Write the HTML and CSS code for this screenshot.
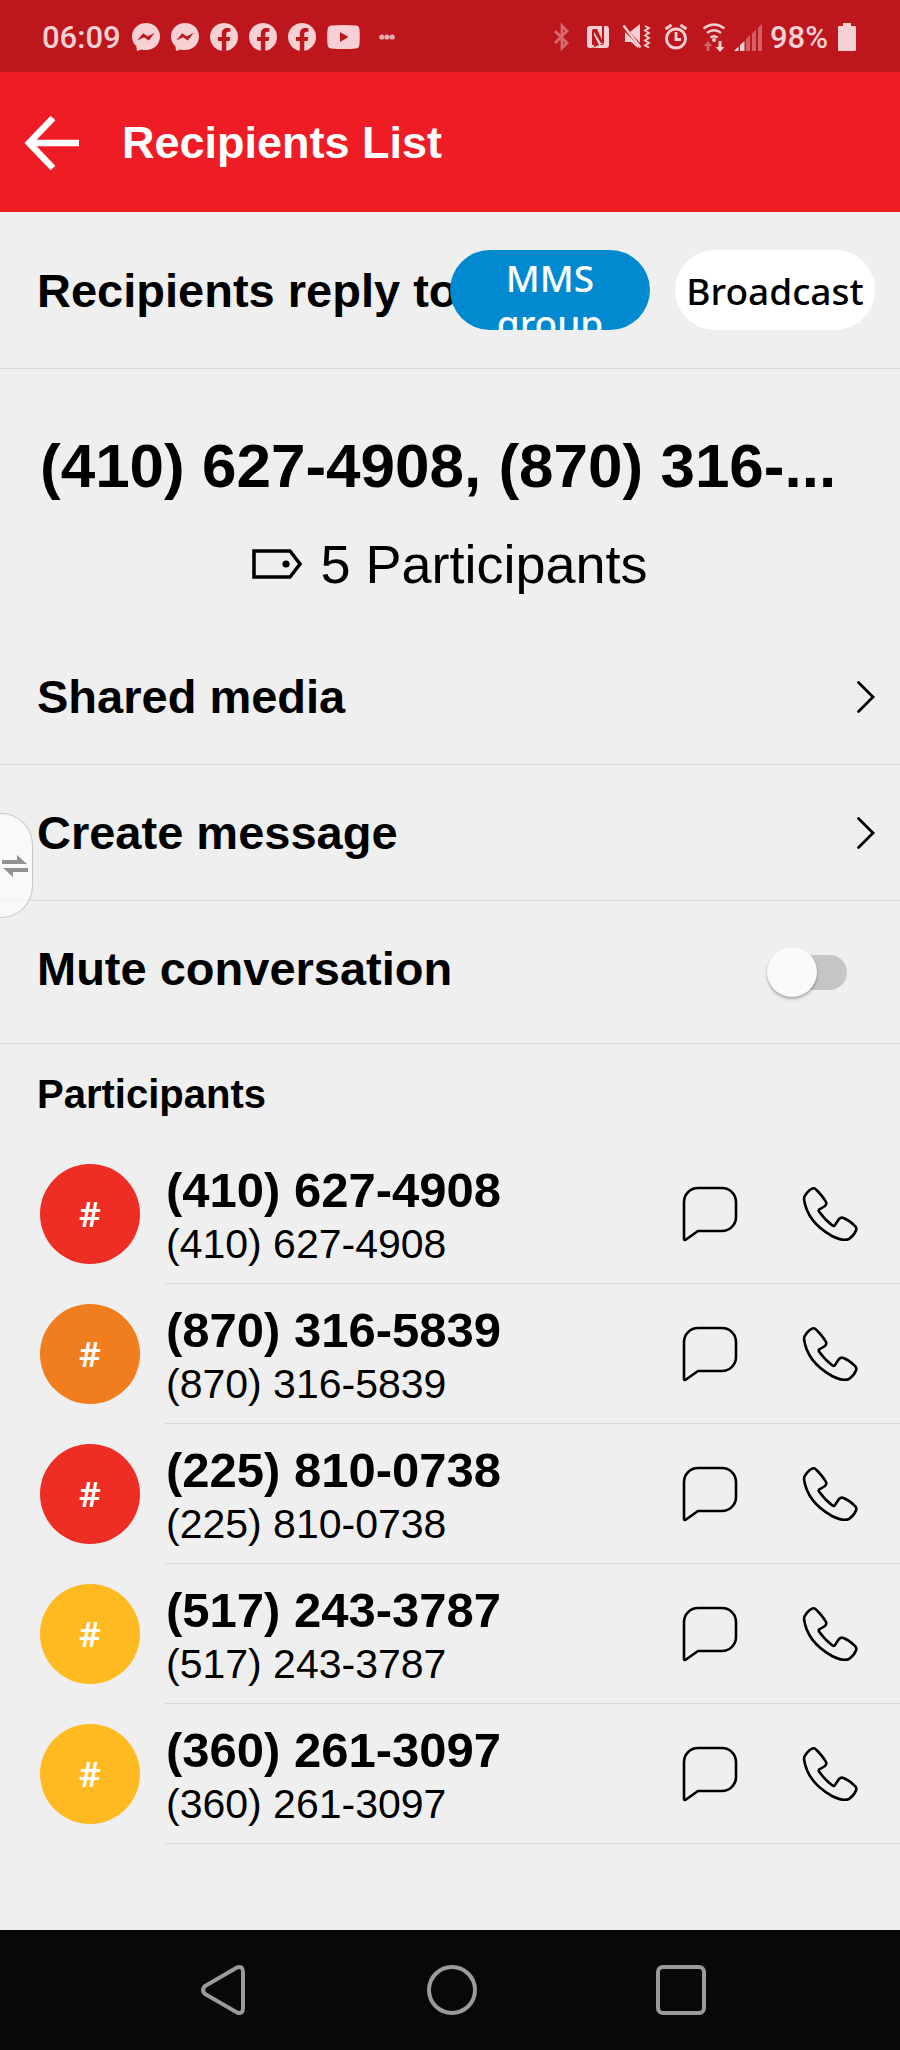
FILE: index.html
```html
<!DOCTYPE html>
<html lang="en" dir="ltr">
  <head>
    <meta charset="utf-8">
    <meta name="viewport" content="width=device-width, initial-scale=1">
    <title>Recipients List</title>
    <link rel="stylesheet" href="styles.css">
  </head>
  <body>
    <!-- shared icons -->
    <svg class="sprite" aria-hidden="true">
      <symbol id="messenger" viewBox="0 0 28 28">
        <path fill="currentColor" fill-rule="evenodd" d="M14 0C6 0 0 5.900 0 13.500c0 4 1.700 7.400 4.400 9.800L5 28l4.500-1.500c1.400.4 2.900.6 4.500.6 8 0 14-5.900 14-13.600S22 0 14 0zM5.200 17.500l6-7.300 4.500 3.200 7-3.600-5.900 7.700-4.700-3.200z"/>
      </symbol>
      <symbol id="facebook" viewBox="0 0 28 28">
        <path fill="currentColor" d="M28 14a14 14 0 1 0-16.200 13.800V18H8v-4h3.800v-3.400C11.800 7 14 5 17.200 5c1.600 0 3.200.3 3.200.3v3.500h-1.800c-1.700 0-2.300 1.100-2.300 2.200v3h4l-.7 4h-3.300v9.800A14 14 0 0 0 28 14z"/>
      </symbol>
      <symbol id="chevron" viewBox="0 0 18 32">
        <path fill="none" stroke="currentColor" stroke-width="2.800" stroke-linecap="round" d="M1.500 1.500L16 16 1.500 30.500"/>
      </symbol>
      <symbol id="chat" viewBox="0 0 56 56">
        <path fill="none" stroke="currentColor" stroke-width="2.600" stroke-linejoin="round" d="M2 53V16A14 14 0 0 1 16 2H40A14 14 0 0 1 54 16V31A14 14 0 0 1 40 45H16L4 53.500Q2 54.500 2 53z"/>
      </symbol>
      <symbol id="phone" viewBox="-1 -1 56 56">
        <path fill="none" stroke="currentColor" stroke-width="2.600" stroke-linejoin="round" d="M1 12C1 8 6 3 9 1.600Q11.500.5 13.500 3Q20 9.500 23 15Q24 17 22 19L17 22Q15 23 16 24.500Q22 33 29.500 38.500Q31 39.500 32 38L36 32Q38 30 40.500 31Q47 33.500 52 39Q54 41 53 43.500Q51 48.500 46 52Q40 54.500 29 49Q4 35 1 12z"/>
      </symbol>
    </svg>

    <div class="status-bar">
      <div class="status-left">
        <span class="time">06:09</span>
        <svg width="28" height="28"><use href="#messenger"/></svg>
        <svg width="28" height="28"><use href="#messenger"/></svg>
        <svg width="28" height="28"><use href="#facebook"/></svg>
        <svg width="28" height="28"><use href="#facebook"/></svg>
        <svg width="28" height="28"><use href="#facebook"/></svg>
        <svg width="33" height="24" viewBox="0 0 33 24">
          <path fill="currentColor" fill-rule="evenodd" d="M4 .5Q16.500-.5 29 .5Q32 .8 32.400 4Q33.200 12 32.400 20Q32 23 29 23.500Q16.500 24.500 4 23.500Q1 23 .6 20Q-.2 12 .6 4Q1 1 4 .5zM13 7v10l8.500-5z"/>
        </svg>
        <svg class="more" width="16" height="6" viewBox="0 0 16 6" fill="currentColor" opacity=".8">
          <circle cx="2.800" cy="3" r="2.600"/><circle cx="8" cy="3" r="2.600"/><circle cx="13.200" cy="3" r="2.600"/>
        </svg>
      </div>
      <div class="status-right">
        <div class="status-icons">
          <svg width="24" height="28" viewBox="0 0 24 28" fill="none" stroke="currentColor" stroke-width="2.800" opacity=".45">
            <path d="M5 8l12 12-5 5V3l5 5L5 20"/>
          </svg>
          <svg width="24" height="28" viewBox="0 0 24 28">
            <path fill="currentColor" d="M4 3h16q3 0 3 3v16q0 3-3 3H4q-3 0-3-3V6q0-3 3-3z"/>
            <path fill="#bd171d" d="M6 8q0-2 2-2h3l5 11V3h2v17h-3L8 9v13H6zM18 20q0 2-2 2h-3l-5-10v13H6z" fill-rule="nonzero"/>
          </svg>
          <svg width="30" height="28" viewBox="0 0 30 28">
            <path fill="currentColor" d="M8 9l10-8v19zM3 9l13 13v3l-7-6H3z"/>
            <path fill="none" stroke="currentColor" stroke-width="2.400" d="M1.500 2.500l17 22"/>
            <path fill="none" stroke="currentColor" stroke-width="1.800" d="M23 3l4 2-4 2.500 4 2.500-4 2.500 4 2.500-4 2.500 4 2.500-4 2.500 4 2"/>
          </svg>
          <svg width="24" height="28" viewBox="0 0 24 28" fill="none" stroke="currentColor" stroke-width="2.800">
            <circle cx="12" cy="15.500" r="9.500"/>
            <path d="M12 9v7.500h5M1.500 6l6-4M22.500 6l-6-4"/>
          </svg>
        </div>
        <svg width="24" height="30" viewBox="0 0 24 30">
          <g fill="none" stroke="currentColor" stroke-width="2.400">
            <path d="M1.500 6.500q10.500-8 21 0M5 11q7-5.500 14 0M8.500 15.500q3.500-2.500 7 0"/>
          </g>
          <circle cx="12" cy="18" r="2" fill="currentColor"/>
          <path fill="currentColor" d="M16.500 19h3v6h3L18 30l-4.500-5h3z"/>
          <path fill="currentColor" opacity=".4" d="M4.500 29h3v-5h3L6 19l-4.500 5h3z"/>
        </svg>
        <svg width="28" height="28" viewBox="0 0 28 28" fill="currentColor">
          <path d="M0 28l4.500-4.500V28zM6 22l4.500-4v10H6z"/>
          <path opacity=".4" d="M12 16l4-4v16h-4zM18 10.500l4-4V28h-4zM24 5l4-4v27h-4z"/>
        </svg>
        <span class="battery-level">98%</span>
        <svg width="20" height="28" viewBox="0 0 20 28">
          <path fill="currentColor" d="M7 0h8v3h4q1 0 1 1v23q0 1-1 1H3q-1 0-1-1V4q0-1 1-1h4z"/>
        </svg>
      </div>
    </div>

    <header class="app-bar">
      <button class="icon-button" type="button" aria-label="Back">
        <svg width="55" height="56" viewBox="0 0 55 56" fill="none" stroke="currentColor" stroke-width="6.500">
          <path d="M29 3L5 28l24 25M5 28h50"/>
        </svg>
      </button>
      <h1>Recipients List</h1>
    </header>

    <main>
      <div class="row reply-row">
        <span class="reply-label">Recipients reply to</span>
        <div class="pills">
          <button class="pill selected" type="button" aria-pressed="true"><span>MMS group</span></button>
          <button class="pill" type="button" aria-pressed="false"><span>Broadcast</span></button>
        </div>
      </div>

      <section class="summary">
        <h2>(410) 627-4908, (870) 316-...</h2>
        <p>
          <svg width="50" height="30" viewBox="0 0 50 30">
            <path fill="none" stroke="currentColor" stroke-width="3.500" d="M2 2h36l10 13-10 13H2z"/>
            <circle cx="34" cy="15" r="3.600" fill="currentColor"/>
          </svg>
          <span>5 Participants</span>
        </p>
      </section>

      <a class="row" href="#">
        <span>Shared media</span>
        <svg width="18" height="32"><use href="#chevron"/></svg>
      </a>
      <div class="handle-anchor">
        <a class="row" href="#">
          <span>Create message</span>
          <svg width="18" height="32"><use href="#chevron"/></svg>
        </a>
        <button class="side-handle" type="button" aria-label="Switch">
          <svg width="26" height="22" viewBox="0 0 26 22" fill="currentColor">
            <path d="M0 5h15V0l10 9H0zM26 13v4H11v5L1 13z"/>
          </svg>
        </button>
      </div>
      <div class="row mute-row">
        <label for="mute">Mute conversation</label>
        <input class="switch" id="mute" type="checkbox" role="switch">
      </div>

      <h3>Participants</h3>
      <ul class="participants">
        <li>
          <span class="avatar red">#</span>
          <div class="person">
            <div class="numbers"><strong>(410) 627-4908</strong><span>(410) 627-4908</span></div>
            <button class="icon-button" type="button" aria-label="Message"><svg width="56" height="56"><use href="#chat"/></svg></button>
            <button class="icon-button" type="button" aria-label="Call"><svg width="56" height="56"><use href="#phone"/></svg></button>
          </div>
        </li>
        <li>
          <span class="avatar orange">#</span>
          <div class="person">
            <div class="numbers"><strong>(870) 316-5839</strong><span>(870) 316-5839</span></div>
            <button class="icon-button" type="button" aria-label="Message"><svg width="56" height="56"><use href="#chat"/></svg></button>
            <button class="icon-button" type="button" aria-label="Call"><svg width="56" height="56"><use href="#phone"/></svg></button>
          </div>
        </li>
        <li>
          <span class="avatar red">#</span>
          <div class="person">
            <div class="numbers"><strong>(225) 810-0738</strong><span>(225) 810-0738</span></div>
            <button class="icon-button" type="button" aria-label="Message"><svg width="56" height="56"><use href="#chat"/></svg></button>
            <button class="icon-button" type="button" aria-label="Call"><svg width="56" height="56"><use href="#phone"/></svg></button>
          </div>
        </li>
        <li>
          <span class="avatar yellow">#</span>
          <div class="person">
            <div class="numbers"><strong>(517) 243-3787</strong><span>(517) 243-3787</span></div>
            <button class="icon-button" type="button" aria-label="Message"><svg width="56" height="56"><use href="#chat"/></svg></button>
            <button class="icon-button" type="button" aria-label="Call"><svg width="56" height="56"><use href="#phone"/></svg></button>
          </div>
        </li>
        <li>
          <span class="avatar yellow">#</span>
          <div class="person">
            <div class="numbers"><strong>(360) 261-3097</strong><span>(360) 261-3097</span></div>
            <button class="icon-button" type="button" aria-label="Message"><svg width="56" height="56"><use href="#chat"/></svg></button>
            <button class="icon-button" type="button" aria-label="Call"><svg width="56" height="56"><use href="#phone"/></svg></button>
          </div>
        </li>
      </ul>
    </main>

    <nav class="nav-bar">
      <button class="icon-button" type="button" aria-label="Back">
        <svg width="50" height="50" viewBox="0 0 50 50" fill="none" stroke="currentColor" stroke-width="4">
          <path d="M39 2.500L7 21Q3 25 7 29L39 47.500Q45 49.500 45 43V7Q45 .5 39 2.500z"/>
        </svg>
      </button>
      <button class="icon-button" type="button" aria-label="Home">
        <svg width="50" height="50" viewBox="0 0 50 50" fill="none" stroke="currentColor" stroke-width="4">
          <circle cx="25" cy="25" r="23"/>
        </svg>
      </button>
      <button class="icon-button" type="button" aria-label="Recent apps">
        <svg width="50" height="50" viewBox="0 0 50 50" fill="none" stroke="currentColor" stroke-width="4">
          <rect x="2" y="2" width="46" height="46" rx="5"/>
        </svg>
      </button>
    </nav>
  </body>
</html>
```

FILE: styles.css
```css
* {
  box-sizing: border-box;
}

body {
  font-family: 'Liberation Sans', Arial, sans-serif;
  margin: 0;
  min-height: 100vh;
  display: flex;
  flex-direction: column;
  color: #000;
  background-color: #efefef;
}

h1, h2, h3, p, ul {
  margin: 0;
  padding: 0;
}

svg {
  display: block;
  flex: none;
}

.sprite {
  position: absolute;
  width: 0;
  height: 0;
}

.icon-button {
  padding: 0;
  border: 0;
  background: none;
  color: inherit;
  cursor: pointer;
}

/* phone status bar */
.status-bar {
  display: flex;
  justify-content: space-between;
  align-items: center;
  height: 72px;
  padding: 2px 44px 0 42px;
  font-family: Roboto, sans-serif;
  color: #f6d0d2;
  background-color: #bd171d;
}

.status-left {
  display: flex;
  align-items: center;
  gap: 11px;
}

.status-right {
  display: flex;
  align-items: center;
  gap: 8px;
}

.status-icons {
  display: flex;
  gap: 12px;
  margin-right: 6px;
}

.time, .battery-level {
  font-size: 31px;
  font-weight: 500;
}

.more {
  margin-left: 8px;
}

.app-bar {
  display: flex;
  align-items: center;
  gap: 43px;
  height: 140px;
  padding: 2px 24px 0;
  color: #fff;
  background-color: #ee1d25;
}

h1 {
  font-size: 45px;
}

/* full width rows */
.row {
  display: flex;
  align-items: center;
  justify-content: space-between;
  min-height: 136px;
  padding: 0 25px 0 37px;
  border-bottom: 1px solid #dcdcdc;
  font-size: 47px;
  font-weight: bold;
  color: #000;
  text-decoration: none;
}

.reply-row {
  min-height: 157px;
}

.reply-label {
  flex: 1;
  min-width: 0;
  white-space: nowrap;
}

.pills {
  position: relative;
  display: flex;
  gap: 25px;
}

.pill {
  display: flex;
  justify-content: center;
  width: 200px;
  height: 80px;
  padding: 18px 10px 0;
  border: 0;
  border-radius: 40px;
  overflow: hidden;
  font-family: 'Noto Sans', sans-serif;
  font-size: 37px;
  font-weight: 500;
  line-height: 45px;
  color: #000;
  background-color: #fff;
}

.pill.selected {
  padding: 5px 30px 0;
  color: #fff;
  background-color: #018ad0;
}

.summary {
  padding: 57px 40px 25px;
}

h2 {
  font-size: 62px;
  line-height: 80px;
  white-space: nowrap;
  overflow: hidden;
  text-overflow: ellipsis;
}

.summary p {
  display: flex;
  align-items: center;
  justify-content: center;
  gap: 18px;
  margin-top: 18px;
  font-size: 54px;
  line-height: 80px;
}

.handle-anchor {
  position: relative;
}

/* edge handle floating over the list */
.side-handle {
  position: absolute;
  left: 0;
  top: 48px;
  z-index: 1;
  width: 33px;
  height: 105px;
  padding: 0 0 0 2px;
  border: 1px solid #c8c8c8;
  border-left: 0;
  border-radius: 0 32px 32px 0;
  color: #929292;
  background-color: rgba(255, 255, 255, 0.6);
}

.mute-row {
  min-height: 143px;
  padding-right: 53px;
}

.mute-row label {
  padding-bottom: 8px;
}

.switch {
  appearance: none;
  position: relative;
  width: 70px;
  height: 35px;
  margin: 0;
  border-radius: 18px;
  background-color: #c5c5c5;
}

.switch::before {
  content: '';
  position: absolute;
  left: -10px;
  top: -8px;
  width: 50px;
  height: 50px;
  border-radius: 50%;
  background-color: #fafafa;
  box-shadow: 0 2px 3px rgba(0, 0, 0, 0.3);
}

.switch:checked::before {
  left: 30px;
}

h3 {
  padding-left: 37px;
  font-size: 40px;
  line-height: 100px;
}

.participants {
  list-style: none;
  padding-bottom: 86px;
}

.participants li {
  display: flex;
  align-items: center;
  gap: 24px;
  padding-left: 40px;
}

.avatar {
  display: flex;
  align-items: center;
  justify-content: center;
  flex: none;
  width: 100px;
  height: 100px;
  border-radius: 50%;
  font-family: 'Noto Sans', sans-serif;
  font-size: 34px;
  font-weight: 600;
  color: #fff;
}

.red {
  background-color: #ee2e24;
}

.orange {
  background-color: #f07d1e;
}

.yellow {
  background-color: #ffb921;
}

.person {
  flex: 1;
  display: flex;
  align-items: center;
  gap: 64px;
  min-height: 140px;
  padding: 0 42px 0 2px;
  border-bottom: 1px solid #dcdcdc;
}

.numbers {
  flex: 1;
  display: flex;
  flex-direction: column;
  font-size: 41px;
  line-height: 48px;
}

.numbers strong {
  font-size: 49px;
  line-height: 60px;
}

/* phone navigation */
.nav-bar {
  display: flex;
  align-items: center;
  justify-content: center;
  gap: 20%;
  height: 120px;
  margin-top: auto;
  padding-left: 4px;
  color: #9b9b9b;
  background-color: #080808;
}
```
